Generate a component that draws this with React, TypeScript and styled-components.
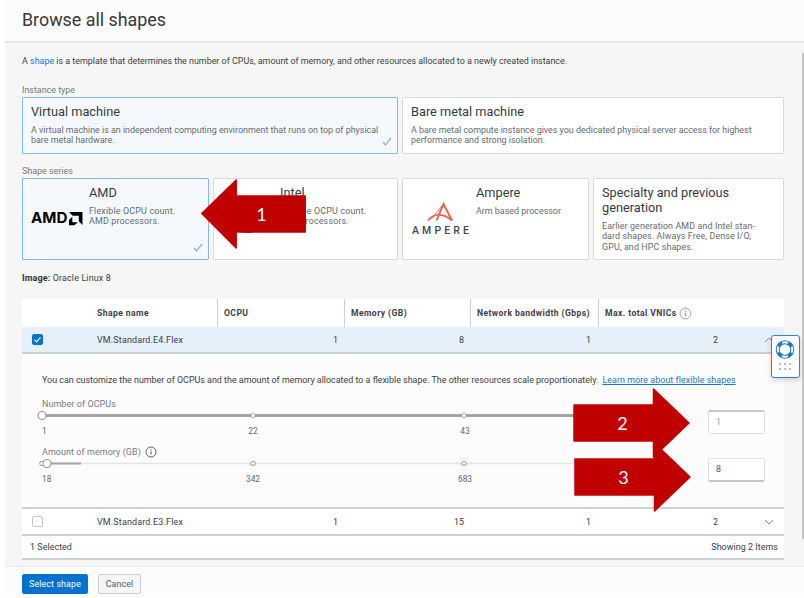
import React from "react";
import styled, { createGlobalStyle } from "styled-components";

const Global = createGlobalStyle`
  * { box-sizing: border-box; }
  body { margin: 0; background: #fff; font-family: Roboto, "Liberation Sans", sans-serif; font-size: 8.92px; color: #3c4045; }
`;

const Panel = styled.div`
  position: relative;
  width: 804px;
  height: 598px;
  padding-left: 5px;
  display: flex;
  flex-direction: column;
  overflow: hidden;
  background: #fff;
`;
const Header = styled.header`
  flex: none;
  height: 43px;
  padding: 0 17px;
  background: #fcfcfc;
  border-bottom: 2px solid #e8e8e8;
`;
const Title = styled.h1`
  margin: 0;
  font-size: 17.85px;
  font-weight: 400;
  line-height: 40px;
  color: #36393d;
`;
const Main = styled.main`
  position: relative;
  flex: none;
  height: 523px;
  width: 799px;
  padding: 11px 20px 0 17px;
  background: #f6f6f6;
`;
const Scroll = styled.div`
  position: absolute;
  right: 0;
  top: 10px;
  width: 2px;
  height: 486px;
  background: #c6c6c6;
`;
const Intro = styled.p`
  margin: 0;
  line-height: 14px;
  white-space: nowrap;
  a { color: #1678cf; }
`;
const Label = styled.div<{ $top: number }>`
  margin-top: ${(p) => p.$top}px;
  height: 12px;
  line-height: 12px;
  color: #777b80;
`;
const Cards = styled.div<{ $cols: string; $h: number }>`
  display: grid;
  grid-template-columns: ${(p) => p.$cols};
  gap: 4px;
  height: ${(p) => p.$h}px;
  margin-top: 1px;
`;
const Card = styled.div<{ $on?: boolean }>`
  position: relative;
  display: flex;
  padding: 6px 8px;
  background: ${(p) => (p.$on ? "#f5f9fe" : "#fff")};
  border: 1px solid ${(p) => (p.$on ? "#84b9e6" : "#d8dbde")};
  border-radius: 1px;
`;
const Logo = styled.div`
  width: 58px;
  flex: none;
  svg { display: block; }
`;
const CardTitle = styled.div`
  font-size: 12.75px;
  line-height: 15px;
  color: #36393d;
  white-space: nowrap;
`;
const CardText = styled.div<{ $top?: number; $spacing?: number }>`
  margin-top: ${(p) => p.$top ?? 6}px;
  line-height: 10.4px;
  letter-spacing: ${(p) => p.$spacing ?? 0}px;
  color: #666a70;
  white-space: nowrap;
`;
const Tick = styled.svg`
  position: absolute;
  right: 5px;
  bottom: 7px;
`;
const ImageLine = styled.div`
  margin-top: 12px;
  height: 14px;
  line-height: 14px;
  letter-spacing: 0.15px;
  b { color: #303338; }
`;
const Table = styled.div`
  width: 762px;
  margin-top: 14px;
`;
const Row = styled.div<{ $kind?: "head" | "on" }>`
  display: grid;
  grid-template-columns: 195px 127px 126px 128px 186px;
  height: ${(p) => (p.$kind === "head" ? 28 : 27)}px;
  background: ${(p) => (p.$kind === "on" ? "#e5f0f9" : "#fff")};
  border-bottom: ${(p) => (p.$kind === "head" ? "0" : "2px solid #cbd1d8")};
`;
const HeadCell = styled.div<{ $first?: boolean }>`
  display: flex;
  align-items: center;
  padding-left: ${(p) => (p.$first ? 75 : 6)}px;
  border-left: ${(p) => (p.$first ? 0 : 1)}px solid #cbd0d5;
  font-weight: 700;
  font-size: 8.6px;
  letter-spacing: 0.42px;
  color: #3c4045;
  white-space: nowrap;
  svg { margin-left: 2px; }
`;
const NameCell = styled.div`
  display: grid;
  grid-template-columns: 65px 1fr;
  align-items: center;
  padding-left: 10px;
  letter-spacing: 0.18px;
  white-space: nowrap;
`;
const NumCell = styled.div<{ $pad?: number }>`
  display: flex;
  align-items: center;
  justify-content: flex-end;
  padding-right: ${(p) => p.$pad ?? 6}px;
`;
const LastCell = styled.div`
  display: grid;
  grid-template-columns: 120px 1fr;
  align-items: center;
  text-align: right;
  svg { margin-left: 46px; display: block; }
`;
const Check = styled.span<{ $on?: boolean }>`
  display: block;
  width: 11px;
  height: 11px;
  border-radius: 2px;
  border: 1px solid ${(p) => (p.$on ? "#0572ce" : "#c3c7cc")};
  background: ${(p) => (p.$on ? "#0572ce" : "#fff")};
  svg { display: block; }
`;
const Detail = styled.div`
  height: 155px;
  padding: 20px 20px 0;
  background: #fcfcfc;
  border-bottom: 2px solid #cbd1d8;
`;
const Hint = styled.div`
  line-height: 12px;
  height: 12px;
  white-space: nowrap;
  a { margin-left: 2px; color: #1678cf; text-decoration: underline; letter-spacing: 0.05px; }
`;
const Setting = styled.div<{ $top: number }>`
  display: flex;
  justify-content: space-between;
  height: 40px;
  margin-top: ${(p) => p.$top}px;
`;
const SettingLabel = styled.div`
  display: flex;
  align-items: center;
  height: 12px;
  gap: 4px;
  color: #777b80;
  letter-spacing: 0.1px;
`;
const Range = styled.svg`
  display: block;
  margin-left: -5px;
`;
const Marks = styled.div`
  display: grid;
  grid-template-columns: 200px 22px 190px 22px;
  margin-top: 4px;
  line-height: 12px;
  font-size: 8.4px;
  color: #63676c;
  span:nth-child(n + 2) { text-align: center; }
  span:nth-child(4) { grid-column: 4; }
`;
const Field = styled.div<{ $dim?: boolean }>`
  width: 57px;
  height: 24px;
  margin: 12px -1px 0 0;
  padding-left: 7px;
  line-height: 20px;
  border: 1px solid #dfe1e4;
  border-${(p) => (p.$dim ? "top" : "bottom")}: 2px solid #c4c9cf;
  border-radius: 2px;
  background: #fff;
  color: ${(p) => (p.$dim ? "#a0a4a9" : "#55595e")};
`;
const TableFoot = styled.div`
  display: flex;
  justify-content: space-between;
  align-items: center;
  height: 24px;
  padding: 0 6px 0 8px;
  background: #fff;
  border-bottom: 2px solid #cbd1d8;
  letter-spacing: 0.05px;
`;
const Actions = styled.footer`
  flex: none;
  display: flex;
  gap: 10px;
  height: 31px;
  padding: 7px 17px 0;
  background: #fcfcfc;
  border-top: 1px solid #ebebeb;
`;
const Button = styled.button<{ $primary?: boolean }>`
  width: ${(p) => (p.$primary ? 66 : 43)}px;
  height: 20px;
  padding: 0;
  font-family: inherit;
  font-size: 8.92px;
  letter-spacing: 0.1px;
  white-space: nowrap;
  border-radius: 2px;
  border: 1px solid ${(p) => (p.$primary ? "#0572ce" : "#cbced2")};
  background: ${(p) => (p.$primary ? "#0572ce" : "#f6f6f6")};
  color: ${(p) => (p.$primary ? "#fff" : "#55595e")};
`;
const Help = styled.div`
  position: absolute;
  left: 771px;
  top: 335px;
  width: 29px;
  height: 43px;
  border: 1.5px solid #2f86d4;
  border-radius: 3px;
  background: #fff;
  box-shadow: 0 2px 5px rgba(0, 0, 0, 0.16);
  svg { display: block; }
`;
const Callout = styled.div<{ $x: number; $y: number; $left?: boolean }>`
  position: absolute;
  left: ${(p) => p.$x}px;
  top: ${(p) => p.$y}px;
  width: ${(p) => (p.$left ? 105 : 117)}px;
  height: 70px;
  display: grid;
  place-items: center;
  color: #fff;
  font: 18px Lato, "Open Sans", sans-serif;
  svg, span { grid-area: 1 / 1; }
  svg { display: block; }
  span { transform: translateX(${(p) => (p.$left ? 8 : -9)}px); }
`;

const Mark = () => (
  <Tick width="10" height="9" viewBox="0 0 10 9" fill="none" stroke="#5aa5e2" strokeWidth="1.1">
    <path d="M1 5 3.5 8 9 1" />
  </Tick>
);
const Info = ({ light }: { light?: boolean }) => (
  <svg width={light ? 13 : 12} height={light ? 13 : 12} viewBox="0 0 12 12" fill="none" stroke={light ? "#8d9196" : "#5d6166"} strokeWidth={light ? 0.8 : 1}>
    <circle cx="6" cy="6" r="5" />
    <path d="M6 5.3V8.6M6 3.3V4.3" strokeWidth="1.1" />
  </svg>
);
const Chevron = ({ up }: { up?: boolean }) => (
  <svg width="10" height="6" viewBox="0 0 10 6" fill="none" stroke="#8b9096">
    <path d={up ? "M1 5 5 1 9 5" : "M1 1 5 5 9 1"} />
  </svg>
);
const AmdLogo = () => (
  <svg width="58" height="68" viewBox="0 0 58 68">
    <text x="0" y="38.3" fontFamily="Inter, sans-serif" fontWeight="700" fontSize="14.5" textLength="36.5" lengthAdjust="spacingAndGlyphs" fill="#000">AMD</text>
    <path d="M38 27H51.5V40L47.8 36.3V30.7H41.7ZM41.3 31.8V37.2H46.8L43.4 40.3H38V35Z" fill="#000" />
  </svg>
);
const AmpereLogo = () => (
  <svg width="66" height="68" viewBox="0 0 66 68">
    <g fill="none" stroke="#f0604c" strokeWidth="1.9">
      <path d="M17 35.5C23 27.500 33 28.500 41 35.500" />
      <path d="M25.500 35.500 32.500 19 41 35.500" />
      <path d="M32 19.500 20.500 34" strokeWidth="0.9" />
    </g>
    <text x="1" y="48.500" fontFamily="Roboto, sans-serif" fontWeight="500" fontSize="10.500" textLength="57" fill="#45474a">AMPERE</text>
  </svg>
);
const IntelLogo = () => (
  <svg width="58" height="68" viewBox="0 0 58 68">
    <path d="M12 44Q24 50 33 46Q24 47.500 12 44Z" fill="#2578be" stroke="#2578be" />
  </svg>
);
const Arrow = ({ left }: { left?: boolean }) => (
  <svg width={left ? 105 : 117} height="70" viewBox={left ? "0 0 105 70" : "0 0 117 70"}>
    <path
      fill="#c00000"
      stroke="#c00000"
      strokeWidth="1.5"
      strokeLinejoin="round"
      d={left ? "M.8 34.500 35.200 1V17H104.200V53H35.200V69Z" : "M1 17H80.500V1L116 35 80.500 69V53H1Z"}
    />
  </svg>
);

const Slider = ({ memory }: { memory?: boolean }) => (
  <Range width="580" height="11" viewBox="0 0 580 11" fill="#fff">
    <path d="M5 5.500H580" stroke={memory ? "#e4e4e4" : "#a5a5a5"} strokeWidth={memory ? 1.5 : 3} />
    {memory && <path d="M5 5.500H44" stroke="#a5a5a5" strokeWidth="2" />}
    {memory && <circle cx="5" cy="5.500" r="2.300" stroke="#999" />}
    {[216, 427].map((x) => (
      <ellipse key={x} cx={x} cy="5.500" rx={memory ? 2.6 : 1.8} ry={memory ? 1.9 : 2.5} stroke={memory ? "#999" : "#b5b5b5"} />
    ))}
    <circle cx={memory ? 10 : 5} cy="5.500" r="4" stroke="#999" strokeWidth="1.100" />
  </Range>
);

export default function App() {
  return (
    <Panel>
      <Global />
      <Header><Title>Browse all shapes</Title></Header>
      <Main>
        <Scroll />
        <Intro>A <a>shape</a> is a template that determines the number of CPUs, amount of memory, and other resources allocated to a newly created instance.</Intro>
        <Label $top={16}>Instance type</Label>
        <Cards $cols="376px 382px" $h={57}>
          <Card $on>
            <div>
              <CardTitle>Virtual machine</CardTitle>
              <CardText>A virtual machine is an independent computing environment that runs on top of physical<br />bare metal hardware.</CardText>
            </div>
            <Mark />
          </Card>
          <Card>
            <div>
              <CardTitle>Bare metal machine</CardTitle>
              <CardText>A bare metal compute instance gives you dedicated physical server access for highest<br />performance and strong isolation.</CardText>
            </div>
          </Card>
        </Cards>
        <Label $top={11}>Shape series</Label>
        <Cards $cols="187px 185px 187px 191px" $h={81}>
          <Card $on>
            <Logo><AmdLogo /></Logo>
            <div>
              <CardTitle>AMD</CardTitle>
              <CardText $spacing={0.17}>Flexible OCPU count.<br />AMD processors.</CardText>
            </div>
            <Mark />
          </Card>
          <Card>
            <Logo><IntelLogo /></Logo>
            <div>
              <CardTitle>Intel</CardTitle>
              <CardText $spacing={0.17}>Flexible OCPU count.<br />Intel processors.</CardText>
            </div>
          </Card>
          <Card>
            <Logo style={{ width: 65 }}><AmpereLogo /></Logo>
            <div>
              <CardTitle>Ampere</CardTitle>
              <CardText>Arm based processor</CardText>
            </div>
          </Card>
          <Card>
            <div>
              <CardTitle>Specialty and previous<br />generation</CardTitle>
              <CardText $spacing={0.1}>Earlier generation AMD and Intel stan-<br />dard shapes. Always Free, Dense I/O,<br />GPU, and HPC shapes.</CardText>
            </div>
          </Card>
        </Cards>
        <ImageLine><b>Image:</b> Oracle Linux 8</ImageLine>
        <Table>
          <Row $kind="head">
            <HeadCell $first>Shape name</HeadCell>
            <HeadCell>OCPU</HeadCell>
            <HeadCell>Memory (GB)</HeadCell>
            <HeadCell>Network bandwidth (Gbps)</HeadCell>
            <HeadCell>Max. total VNICs <Info light /></HeadCell>
          </Row>
          <Row $kind="on">
            <NameCell>
              <Check $on>
                <svg width="9" height="9" viewBox="0 0 9 9" fill="none" stroke="#fff" strokeWidth="1.200"><path d="M1.500 4.700 3.500 6.800 7.500 2.300" /></svg>
              </Check>
              VM.Standard.E4.Flex
            </NameCell>
            <NumCell>1</NumCell><NumCell>8</NumCell><NumCell $pad={7}>1</NumCell>
            <LastCell>2<Chevron up /></LastCell>
          </Row>
          <Detail>
            <Hint>You can customize the number of OCPUs and the amount of memory allocated to a flexible shape. The other resources scale proportionately. <a>Learn more about flexible shapes</a></Hint>
            <Setting $top={12}>
              <div>
                <SettingLabel>Number of OCPUs</SettingLabel>
                <Slider />
                <Marks><span>1</span><span>22</span><span /><span>43</span></Marks>
              </div>
              <Field $dim>1</Field>
            </Setting>
            <Setting $top={8}>
              <div>
                <SettingLabel>Amount of memory (GB) <Info /></SettingLabel>
                <Slider memory />
                <Marks><span>18</span><span>342</span><span /><span>683</span></Marks>
              </div>
              <Field>8</Field>
            </Setting>
          </Detail>
          <Row>
            <NameCell><Check />VM.Standard.E3.Flex</NameCell>
            <NumCell>1</NumCell><NumCell>15</NumCell><NumCell $pad={7}>1</NumCell>
            <LastCell>2<Chevron /></LastCell>
          </Row>
          <TableFoot><span>1 Selected</span><span>Showing 2 Items</span></TableFoot>
        </Table>
      </Main>
      <Actions>
        <Button $primary>Select shape</Button>
        <Button>Cancel</Button>
      </Actions>
      <Help>
        <svg width="26" height="40" viewBox="0 0 26 40" fill="none">
          <circle cx="13" cy="13.500" r="7.300" stroke="#1678cf" strokeWidth="4" />
          <circle cx="13" cy="13.500" r="7.300" stroke="#fff" strokeWidth="2" strokeDasharray="6.270 5.200" strokeDashoffset="3.135" />
          <g fill="#b9bdc2">
            {[7, 12, 17].map((x) => [27, 32].map((y) => <rect key={`${x}-${y}`} x={x} y={y} width="2" height="2" />))}
          </g>
        </svg>
      </Help>
      <Callout $x={201} $y={179} $left><Arrow left /><span>1</span></Callout>
      <Callout $x={573} $y={388}><Arrow /><span>2</span></Callout>
      <Callout $x={574} $y={442}><Arrow /><span>3</span></Callout>
    </Panel>
  );
}
